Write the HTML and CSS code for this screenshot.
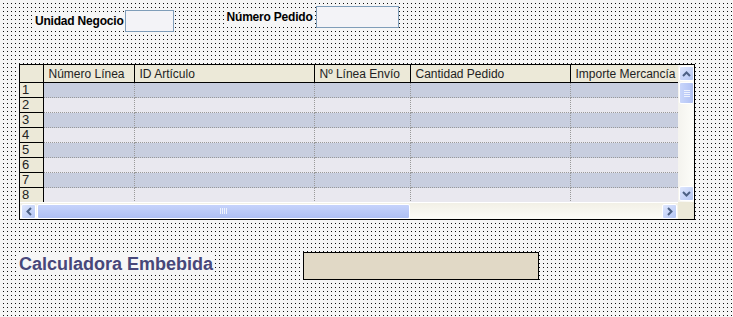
FILE: index.html
```html
<!DOCTYPE html>
<html lang="es">
<head>
  <meta charset="UTF-8">
  <title>Pedido</title>
  <link rel="stylesheet" href="styles.css">
</head>
<body>
  <div class="form">
    <div class="fields">
      <div class="field field-unidad">
        <label>Unidad Negocio</label>
        <input type="text" class="box box-small">
      </div>
      <div class="field field-pedido">
        <label>Número Pedido</label>
        <input type="text" class="box box-wide">
      </div>
    </div>

    <div class="grid">
      <div class="grid-body">
        <table class="lines">
          <colgroup>
            <col class="c-row"><col class="c1"><col class="c2"><col class="c3"><col class="c4"><col class="c5">
          </colgroup>
          <thead>
            <tr>
              <th></th>
              <th>Número Línea</th>
              <th>ID Artículo</th>
              <th>Nº Línea Envío</th>
              <th>Cantidad Pedido</th>
              <th>Importe Mercancía</th>
            </tr>
          </thead>
          <tbody id="rows"></tbody>
        </table>
      </div>
      <div class="vscroll">
        <div class="sbtn up"><svg width="9" height="6" viewBox="0 0 9 6"><path d="M1 5 L4.5 1.5 L8 5" fill="none" stroke="#4d6185" stroke-width="2"/></svg></div>
        <div class="vthumb"><span></span><span></span><span></span><span></span></div>
        <div class="vtrack"></div>
        <div class="sbtn down"><svg width="9" height="6" viewBox="0 0 9 6"><path d="M1 1 L4.5 4.5 L8 1" fill="none" stroke="#4d6185" stroke-width="2"/></svg></div>
      </div>
      <div class="hscroll">
        <div class="sbtn left"><svg width="6" height="9" viewBox="0 0 6 9"><path d="M5 1 L1.5 4.5 L5 8" fill="none" stroke="#4d6185" stroke-width="2"/></svg></div>
        <div class="hthumb"><span></span><span></span><span></span><span></span></div>
        <div class="htrack"></div>
        <div class="sbtn right"><svg width="6" height="9" viewBox="0 0 6 9"><path d="M1 1 L4.5 4.5 L1 8" fill="none" stroke="#4d6185" stroke-width="2"/></svg></div>
      </div>
      <div class="corner"></div>
    </div>

    <div class="calc">
      <h2>Calculadora Embebida</h2>
      <div class="calc-box"></div>
    </div>
  </div>

  <script>
    // Fill the visible rows of the grid
    const tbody = document.getElementById('rows');
    for (let i = 1; i <= 8; i++) {
      const tr = document.createElement('tr');
      tr.className = i % 2 ? 'odd' : 'even';
      let html = '<th>' + i + '</th>';
      for (let c = 0; c < 5; c++) html += '<td></td>';
      tr.innerHTML = html;
      tbody.appendChild(tr);
    }
  </script>
</body>
</html>
```

FILE: styles.css
```css
html, body {
  margin: 0;
  height: 100%;
}
body {
  font-family: "Liberation Sans", Arial, sans-serif;
  font-size: 12px;
  color: #000;
  background-color: #111;
  background-image:
    linear-gradient(to right, #f6f6f6 3px, transparent 3px),
    linear-gradient(to bottom, #f6f6f6 3px, transparent 3px);
  background-size: 4px 4px;
}
.form {
  padding: 6px 0 0 19px;
}
.fields {
  display: flex;
  height: 52px;
}
.field {
  display: flex;
  align-items: center;
  gap: 1px;
}
.field label {
  font-weight: bold;
  font-size: 12px;
  letter-spacing: -0.2px;
  background: #f6f6f6;
}
.field-unidad {
  margin: 4px 0 0 16px;
  align-self: flex-start;
}
.field-pedido {
  margin-left: 53px;
  gap: 3px;
  align-self: flex-start;
}
.box {
  box-sizing: border-box;
  height: 22px;
  margin: 0;
  border: 1px solid #7f9db9;
  background: #f3f3f7;
  padding: 0;
}
.box-small { width: 49px; }
.box-wide { width: 83px; }

.grid {
  box-sizing: border-box;
  width: 676px;
  height: 156px;
  border: 1px solid #000;
  margin-top: 6px;
  display: grid;
  grid-template-columns: 1fr 16px;
  grid-template-rows: 1fr 17px;
  background: #fff;
}
.grid-body {
  overflow: hidden;
  background: #efeef3;
}
.lines {
  border-collapse: collapse;
  table-layout: fixed;
  width: 658px;
}
.c-row { width: 23px; }
.c1 { width: 91px; }
.c2 { width: 180px; }
.c3 { width: 96px; }
.c4 { width: 160px; }
.c5 { width: 108px; }
.lines thead th {
  height: 17px;
  padding: 0 0 0 5px;
  background: #ece9d8;
  border-right: 1px solid #000;
  border-bottom: 1px solid #000;
  font-weight: normal;
  text-align: left;
  font-size: 12px;
  color: #222;
  white-space: nowrap;
  overflow: hidden;
}
.lines thead th:last-child { border-right: none; }
.lines tbody th {
  height: 14px;
  padding: 0 0 0 2px;
  background: #ece9d8;
  border-right: 1px solid #000;
  border-bottom: 1px solid #000;
  font-weight: normal;
  text-align: left;
  font-size: 13px;
  line-height: 14px;
  color: #222;
}
.lines td {
  height: 14px;
  padding: 0;
  border-right: 1px dotted #999;
  border-bottom: 1px dotted #999;
}
.lines td:last-child { border-right: none; }
.odd td { background: #c8cedf; }
.even td { background: #e9e8ef; }

.vscroll {
  display: flex;
  flex-direction: column;
  background: linear-gradient(to right, #f4f3ee, #fdfdf9);
}
.vtrack { flex: 1; }
.sbtn {
  box-sizing: border-box;
  width: 15px;
  height: 15px;
  margin: 1px 0 0 1px;
  border: 1px solid #fff;
  border-radius: 2px;
  background: linear-gradient(135deg, #dfe7fd, #b4c6f5);
  display: flex;
  align-items: center;
  justify-content: center;
}
.sbtn.down { margin: 0 0 1px 1px; }
.vthumb {
  box-sizing: border-box;
  width: 15px;
  height: 22px;
  margin: 1px 0 0 1px;
  border: 1px solid #fff;
  border-radius: 2px;
  background: linear-gradient(to right, #c9d6fb, #b0c1f4);
  display: flex;
  flex-direction: column;
  align-items: center;
  justify-content: center;
  gap: 1px;
}
.vthumb span {
  width: 6px;
  height: 1px;
  background: #eef2fd;
}
.hscroll {
  display: flex;
  align-items: center;
  background: linear-gradient(to bottom, #f2f0e6, #fcfcf8);
  border-top: 1px solid #fff;
}
.hscroll .sbtn { margin: 0 0 0 1px; }
.hscroll .sbtn.right { margin: 0 1px 0 0; }
.hthumb {
  box-sizing: border-box;
  width: 373px;
  height: 15px;
  margin-left: 1px;
  border: 1px solid #fff;
  border-radius: 2px;
  background: linear-gradient(to bottom, #c6d3fb, #aebff4);
  display: flex;
  align-items: center;
  justify-content: center;
  gap: 1px;
}
.hthumb span {
  width: 1px;
  height: 6px;
  background: #eef2fd;
}
.htrack { flex: 1; }
.corner {
  background: #ece9d8;
}

.calc {
  display: flex;
  align-items: center;
  margin-top: 32px;
}
.calc h2 {
  margin: 0 0 4px;
  font-size: 18px;
  font-weight: bold;
  color: #47477a;
  background: #f6f6f6;
}
.calc-box {
  box-sizing: border-box;
  width: 236px;
  height: 28px;
  margin-left: 90px;
  border: 1px solid #000;
  background: #e1d9c6;
}
```
